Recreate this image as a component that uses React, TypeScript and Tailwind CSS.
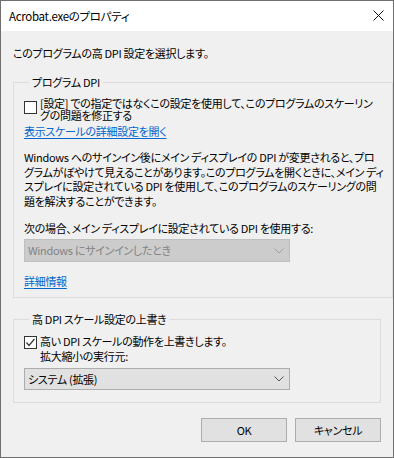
import React from "react";

const F = "font-['Noto_Sans_CJK_JP',sans-serif] [font-feature-settings:'palt']";

function Chevron({ color }: { color: string }) {
  return (
    <svg width="10" height="6" viewBox="0 0 10 6" className="shrink-0">
      <path d="M0.5 0.5 L5 5 L9.5 0.5" fill="none" stroke={color} strokeWidth="1" />
    </svg>
  );
}

function Box({ checked }: { checked?: boolean }) {
  return (
    <div className="w-[13px] h-[13px] border border-[#333333] bg-white shrink-0 flex items-center justify-center">
      {checked && (
        <svg width="11" height="11" viewBox="0 0 11 11">
          <path d="M1.5 5.5 L4 8.5 L9.5 2" fill="none" stroke="#333333" strokeWidth="1.2" />
        </svg>
      )}
    </div>
  );
}

export default function App() {
  return (
    <div className={`w-[394px] h-[458px] bg-[#f0f0f0] border border-[#6f6f6f] flex flex-col text-[11px] tracking-[-0.3px] text-black ${F}`}>
      <div className="h-[30px] bg-white flex items-center justify-between pl-2 pr-[9px] shrink-0">
        <span className="leading-[16px] text-[11.5px]">Acrobat.exeのプロパティ</span>
        <svg width="11" height="11" viewBox="0 0 11 11" className="-mt-[2px]">
          <path d="M0.5 0.5 L10.5 10.5 M10.5 0.5 L0.5 10.5" stroke="#111" strokeWidth="1" />
        </svg>
      </div>
      <div className="flex flex-col px-3">
        <div className="mt-[15px] leading-[14px] whitespace-nowrap">このプログラムの高 DPI 設定を選択します。</div>

        <fieldset className="mt-[15px] border border-[#dcdcdc] h-[223px] pl-[10px] pr-2">
          <legend className="ml-[5px] px-[3px] leading-[14px] whitespace-nowrap">プログラム DPI</legend>
          <div className="mt-[8px] flex items-start gap-[3px]">
            <div className="mt-[4px]"><Box /></div>
            <div className="leading-[12px] whitespace-nowrap">
              <div>[設定] での指定ではなくこの設定を使用して、このプログラムのスケーリン</div>
              <div>グの問題を修正する</div>
            </div>
          </div>
          <div className="mt-[3px] leading-[14px] text-[#0066cc] underline underline-offset-2 whitespace-nowrap w-fit">表示スケールの詳細設定を開く</div>
          <div className="mt-[12px] leading-[14.5px] whitespace-nowrap">
            <div>Windows へのサインイン後にメイン ディスプレイの DPI が変更されると、プロ</div>
            <div>グラムがぼやけて見えることがあります。このプログラムを開くときに、メイン ディ</div>
            <div>スプレイに設定されている DPI を使用して、このプログラムのスケーリングの問</div>
            <div>題を解決することができます。</div>
          </div>
          <div className="mt-[13px] leading-[14px] whitespace-nowrap">次の場合、メイン ディスプレイに設定されている DPI を使用する:</div>
          <div className="mt-[4px] w-[266px] h-[23px] bg-[#cccccc] border border-[#bfbfbf] flex items-center justify-between pl-[3px] pr-[5px] text-[#838383]">
            <span className="whitespace-nowrap">Windows にサインインしたとき</span>
            <Chevron color="#a0a0a0" />
          </div>
          <div className="mt-[12px] leading-[14px] text-[#0066cc] underline underline-offset-2 whitespace-nowrap w-fit">詳細情報</div>
        </fieldset>

        <fieldset className="mt-[14px] border border-[#dcdcdc] h-[91px] pl-[10px] pr-2">
          <legend className="ml-[5px] px-[3px] leading-[14px] whitespace-nowrap">高 DPI スケール設定の上書き</legend>
          <div className="mt-[8px] flex items-start gap-[3px]">
            <div className="mt-[2px]"><Box checked /></div>
            <div className="leading-[14.5px] whitespace-nowrap">
              <div>高い DPI スケールの動作を上書きします。</div>
              <div>拡大縮小の実行元:</div>
            </div>
          </div>
          <div className="mt-[5px] w-[266px] h-[22px] bg-[#e1e1e1] border border-[#adadad] flex items-center justify-between pl-[3px] pr-[5px]">
            <span className="whitespace-nowrap">システム (拡張)</span>
            <Chevron color="#555555" />
          </div>
        </fieldset>

        <div className="mt-[15px] flex justify-end gap-2">
          <button className="w-[86px] h-[24px] bg-[#e1e1e1] border border-[#adadad] leading-[14px]">OK</button>
          <button className="w-[86px] h-[24px] bg-[#e1e1e1] border border-[#adadad] leading-[14px]">キャンセル</button>
        </div>
      </div>
    </div>
  );
}
